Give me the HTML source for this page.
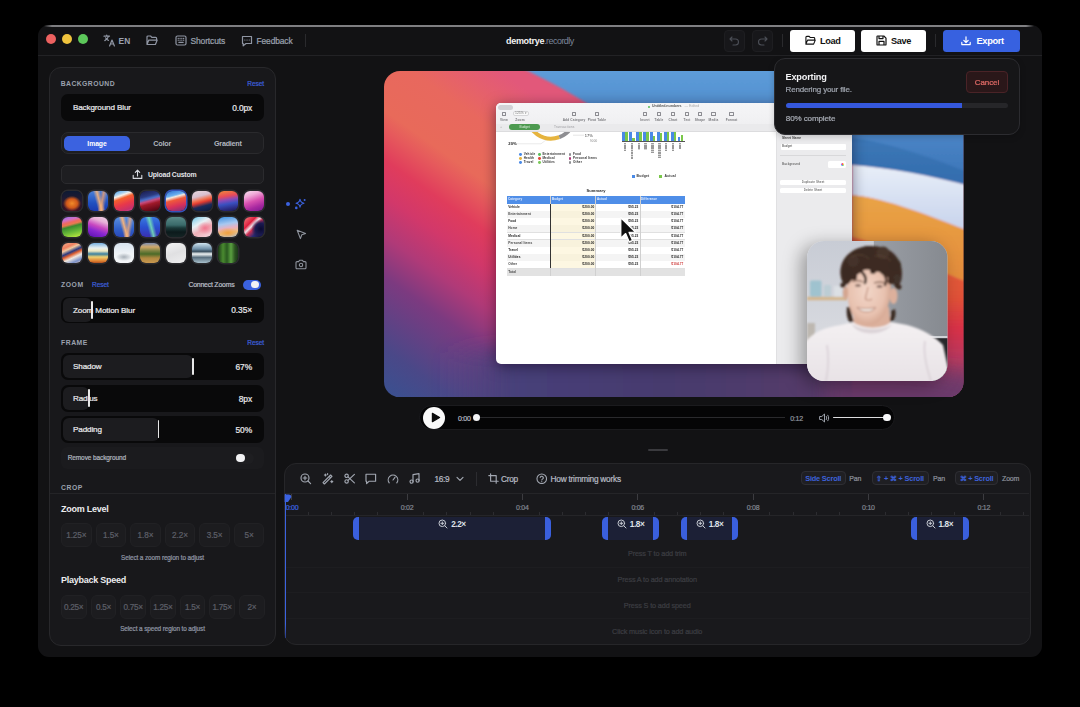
<!DOCTYPE html>
<html><head><meta charset="utf-8">
<style>
*{box-sizing:border-box;margin:0;padding:0}
html,body{width:1080px;height:707px;background:#000;overflow:hidden;font-family:"Liberation Sans",sans-serif}
.a{position:absolute}
.win{left:38px;top:25px;width:1004px;height:632px;background:#121214;border-radius:11px;overflow:hidden}
.topline{left:44px;top:25px;width:990px;height:1.7px;background:linear-gradient(90deg,rgba(125,125,128,0) 0,#7d7d80 8px,#808083 982px,rgba(125,125,128,0) 100%)}
.hdrline{left:38px;top:55px;width:1004px;height:1px;background:#222225}
.dot{width:10px;height:10px;border-radius:50%}
.t{white-space:nowrap;line-height:1}
.ico{stroke:#8f95a3;fill:none;stroke-width:1.2;stroke-linecap:round;stroke-linejoin:round}
.btnw{background:#fff;border-radius:3px}
.panel{background:#18181b;border:1px solid #262629;border-radius:11px}
.lbl{font-size:6.6px;font-weight:700;letter-spacing:.7px;color:#9aa0ad}
.reset{font-size:6.8px;color:#3d5fd9}
.row{background:#09090a;border-radius:7px}
.fill{background:#1c1c1f;border-radius:6px}
.thumbline{width:1.6px;background:#e8e8e8}
.rt{font-size:8px;color:#e6e6e8}
.th{width:20.5px;height:21px;border-radius:6px;border:1.5px solid #2a2a2e}
</style></head><body>
<div class="a win"></div>
<div class="a topline"></div>
<div class="a hdrline"></div>

<!-- traffic lights -->
<div class="a dot" style="left:46.3px;top:33.8px;background:#ec6160"></div>
<div class="a dot" style="left:62px;top:33.8px;background:#efc33d"></div>
<div class="a dot" style="left:77.7px;top:33.8px;background:#5cc75a"></div>


<!-- header left -->
<svg class="a" style="left:103px;top:34px" width="13" height="13" viewBox="0 0 13 13"><g class="ico" stroke-width="1.1"><path d="M1 2.2h5.5M3.7 1v1.2M5.6 2.2c-.6 2-1.8 3.4-3.8 4.4M2.6 3.8c.7 1.3 1.6 2.1 2.8 2.6"/><path d="M6.6 12l2.4-6 2.4 6M7.4 10h3.2"/></g></svg>
<div class="a t" style="left:118.5px;top:37.4px;font-size:8.4px;color:#9ba1ae;font-weight:700;letter-spacing:.1px">EN</div>
<svg class="a" style="left:146px;top:34.5px" width="12" height="11" viewBox="0 0 12 11"><path class="ico" d="M1 9.5V2a1 1 0 0 1 1-1h2.6l1.2 1.3H9.6a1 1 0 0 1 1 1v1.2M1 9.5l1.8-4.4h8.4L9.4 9.5z"/></svg>
<svg class="a" style="left:175px;top:35px" width="12" height="11" viewBox="0 0 12 11"><g class="ico"><rect x="1" y="1" width="10" height="9" rx="1.5"/><path d="M3.2 3.4h.1M5 3.4h.1M6.8 3.4h.1M8.6 3.4h.1M3.2 5.2h.1M5 5.2h.1M6.8 5.2h.1M8.6 5.2h.1M3.8 7.3h4.4"/></g></svg>
<div class="a t" style="-webkit-text-stroke:.22px currentColor;left:190.5px;top:37.1px;font-size:8.5px;color:#9ba1ae;letter-spacing:-.15px">Shortcuts</div>
<svg class="a" style="left:241px;top:34.5px" width="12" height="12" viewBox="0 0 12 12"><g class="ico"><path d="M1.5 1.5h9v7H5L2.2 10.8V8.5h-.7z"/><path d="M3.8 5h.1M6 5h.1M8.2 5h.1"/></g></svg>
<div class="a t" style="-webkit-text-stroke:.22px currentColor;left:256.5px;top:37.1px;font-size:8.4px;color:#9ba1ae;letter-spacing:-.1px">Feedback</div>
<div class="a" style="left:305px;top:34px;width:1px;height:13px;background:#2a2a2d"></div>
<!-- title -->
<div class="a t" style="left:506px;top:37.2px;font-size:9px;letter-spacing:-.3px"><span style="color:#f2f2f3;font-weight:700">demotrye</span><span style="color:#7b8598;letter-spacing:-.55px">.recordly</span></div>
<!-- header right -->
<div class="a" style="left:724px;top:30px;width:21px;height:21.5px;border-radius:4px;background:#17171a;border:1px solid #1e1e21"></div>
<svg class="a" style="left:729px;top:35px" width="11" height="11" viewBox="0 0 11 11"><path d="M3 2 1 4l2 2M1 4h5.5a3 3 0 0 1 0 6H4" fill="none" stroke="#4b4e56" stroke-width="1.1" stroke-linecap="round" stroke-linejoin="round"/></svg>
<div class="a" style="left:751.5px;top:30px;width:21px;height:21.5px;border-radius:4px;background:#17171a;border:1px solid #1e1e21"></div>
<svg class="a" style="left:756.5px;top:35px" width="11" height="11" viewBox="0 0 11 11"><path d="M8 2l2 2-2 2M10 4H4.5a3 3 0 0 0 0 6H7" fill="none" stroke="#4b4e56" stroke-width="1.1" stroke-linecap="round" stroke-linejoin="round"/></svg>
<div class="a" style="left:781.5px;top:34px;width:1px;height:13px;background:#2a2a2d"></div>
<div class="a btnw" style="left:789.7px;top:29.6px;width:65.8px;height:22px"></div>
<svg class="a" style="left:805px;top:35px" width="11" height="11" viewBox="0 0 12 11"><path d="M1 9.5V2a1 1 0 0 1 1-1h2.6l1.2 1.3H9.6a1 1 0 0 1 1 1v1.2M1 9.5l1.8-4.4h8.4L9.4 9.5z" fill="none" stroke="#111" stroke-width="1.2" stroke-linejoin="round"/></svg>
<div class="a t" style="left:820px;top:37px;font-size:9.2px;font-weight:700;color:#111;letter-spacing:-.35px">Load</div>
<div class="a btnw" style="left:860.8px;top:29.6px;width:65.5px;height:22px"></div>
<svg class="a" style="left:875.5px;top:35px" width="11" height="11" viewBox="0 0 11 11"><g fill="none" stroke="#111" stroke-width="1.2" stroke-linejoin="round"><path d="M1 1.6A.6.6 0 0 1 1.6 1h6.2L10 3.2v6.2a.6.6 0 0 1-.6.6H1.6a.6.6 0 0 1-.6-.6z"/><path d="M3 1v2.6h4V1M3 10V6.4h5V10"/></g></svg>
<div class="a t" style="left:891px;top:37px;font-size:9.2px;font-weight:700;color:#111;letter-spacing:-.35px">Save</div>
<div class="a" style="left:934.5px;top:34px;width:1px;height:13px;background:#2a2a2d"></div>
<div class="a" style="left:943.2px;top:29.8px;width:76.6px;height:21.9px;border-radius:3.5px;background:#3761e0"></div>
<svg class="a" style="left:960.5px;top:35.8px" width="10" height="10" viewBox="0 0 10 10"><g fill="none" stroke="#fff" stroke-width="1.2" stroke-linecap="round" stroke-linejoin="round"><path d="M5 .8v5.6M2.8 4.3 5 6.5l2.2-2.2M.8 6.4v2.2h8.4V6.4"/></g></svg>
<div class="a t" style="left:976.5px;top:37px;font-size:9.3px;font-weight:700;color:#fff;letter-spacing:-.35px">Export</div>
<!-- sidebar -->
<div class="a" style="left:49.3px;top:67.0px;width:226.5px;height:578.5px;background:#18181b;border:1px solid #28282b;border-radius:12px"></div>
<div class="a t" style="left:60.7px;top:80.5px;font-size:6.8px;color:#9ba1ae;font-weight:700;letter-spacing:0.45px;">BACKGROUND</div>
<div class="a t" style="right:816.0px;top:80.6px;font-size:6.6px;color:#3d5fd9;font-weight:400;letter-spacing:-0.1px;-webkit-text-stroke:.22px currentColor;">Reset</div>
<div class="a" style="left:61.1px;top:94.4px;width:202.7px;height:26.7px;background:#09090a;border-radius:7px"></div>
<div class="a t" style="left:72.9px;top:104.4px;font-size:8.1px;color:#e8e8ea;font-weight:400;letter-spacing:-0.12px;-webkit-text-stroke:.22px currentColor;">Background Blur</div>
<div class="a t" style="right:827.8px;top:104.3px;font-size:8.4px;color:#e8e8ea;font-weight:400;letter-spacing:-0.1px;-webkit-text-stroke:.22px currentColor;">0.0px</div>
<div class="a" style="left:61.0px;top:132.2px;width:203.0px;height:22.2px;background:#1d1d20;border:1px solid #2a2a2d;border-radius:7px"></div>
<div class="a" style="left:64.0px;top:136.0px;width:66.0px;height:14.7px;background:#3b62e0;border-radius:5px"></div>
<div class="a t" style="left:97.0px;transform:translateX(-50%);top:140.5px;font-size:6.8px;color:#ffffff;font-weight:700;letter-spacing:-0.05px;">Image</div>
<div class="a t" style="left:162.2px;transform:translateX(-50%);top:140.4px;font-size:7.2px;color:#b0b5bf;font-weight:700;letter-spacing:-0.15px;">Color</div>
<div class="a t" style="left:227.8px;transform:translateX(-50%);top:140.4px;font-size:7.2px;color:#b0b5bf;font-weight:700;letter-spacing:-0.25px;">Gradient</div>
<div class="a" style="left:61.0px;top:165.0px;width:203.0px;height:18.8px;background:#1e1e21;border:1px solid #2b2b2e;border-radius:5px"></div>
<svg class="a" style="left:131.5px;top:168.5px" width="11" height="11" viewBox="0 0 11 11"><g fill="none" stroke="#d8dae0" stroke-width="1.1" stroke-linecap="round" stroke-linejoin="round"><path d="M5.5 7V1.2M3.3 3.3 5.5 1.1l2.2 2.2M1.2 6.2v3.2h8.6V6.2"/></g></svg>
<div class="a t" style="left:148.0px;top:171.5px;font-size:6.9px;color:#e2e4e8;font-weight:700;letter-spacing:-0.2px;">Upload Custom</div>
<div class="a" style="left:62.2px;top:191.2px;width:19.4px;height:19.5px;background:radial-gradient(ellipse 60% 50% at 50% 62%,#f08a2a 0,#d0581a 45%,transparent 75%),radial-gradient(ellipse 40% 35% at 50% 90%,#5a1a30 0,transparent 100%),linear-gradient(180deg,#0c1a34 0,#2a1a30 60%,#3a1020 100%);border-radius:6px;box-shadow:0 0 0 1.5px #2b2b2f"></div>
<div class="a" style="left:88.2px;top:191.2px;width:19.4px;height:19.5px;background:linear-gradient(75deg,transparent 40%,rgba(250,180,120,.9) 55%,transparent 70%),linear-gradient(100deg,transparent 55%,rgba(240,160,110,.8) 68%,transparent 85%),linear-gradient(180deg,#4a80d8 0,#2050c0 60%,#1a3ab0 100%);border-radius:6px;box-shadow:0 0 0 1.5px #2b2b2f"></div>
<div class="a" style="left:114.2px;top:191.2px;width:19.4px;height:19.5px;background:linear-gradient(160deg,#4aa0e8 0,#a8d0f0 18%,#f6f0e8 26%,#f4602e 38%,#e8384a 62%,#c8306a 85%,#c84a9a 100%);border-radius:6px;box-shadow:0 0 0 1.5px #2b2b2f"></div>
<div class="a" style="left:140.2px;top:191.2px;width:19.4px;height:19.5px;background:linear-gradient(165deg,#1a1a4a 0,#2a3a80 28%,#4a70c8 40%,#c84a7a 50%,#a01a2a 62%,#6a0a1a 85%,#3a0a10 100%);border-radius:6px;box-shadow:0 0 0 1.5px #2b2b2f"></div>
<div class="a" style="left:166.2px;top:191.2px;width:19.4px;height:19.5px;background:linear-gradient(165deg,#2a6ad0 0,#6ab0f0 25%,#f0e8e0 32%,#f05a3a 45%,#d8305a 70%,#7a3080 100%);border-radius:6px;box-shadow:0 0 0 1.5px #3552b8"></div>
<div class="a" style="left:192.2px;top:191.2px;width:19.4px;height:19.5px;background:linear-gradient(165deg,#e8d8e0 0,#d8c0d0 28%,#f07050 45%,#e03a30 55%,#1a2a5a 72%,#0a1a3a 100%);border-radius:6px;box-shadow:0 0 0 1.5px #2b2b2f"></div>
<div class="a" style="left:218.2px;top:191.2px;width:19.4px;height:19.5px;background:linear-gradient(170deg,#f08a3a 0,#e84a5a 28%,#8a4ab8 45%,#3a50c0 62%,#2a2a80 85%,#1a1a50 100%);border-radius:6px;box-shadow:0 0 0 1.5px #2b2b2f"></div>
<div class="a" style="left:244.2px;top:191.2px;width:19.4px;height:19.5px;background:linear-gradient(160deg,#f8e0f0 0,#f0a8d8 25%,#d850b0 50%,#a828a0 75%,#7a1890 100%);border-radius:6px;box-shadow:0 0 0 1.5px #2b2b2f"></div>
<div class="a" style="left:62.2px;top:217.2px;width:19.4px;height:19.5px;background:linear-gradient(165deg,#8a70e8 0,#d070c8 18%,#f06a60 30%,#e87a50 38%,#3a8a30 48%,#68b838 70%,#c8f040 100%);border-radius:6px;box-shadow:0 0 0 1.5px #2b2b2f"></div>
<div class="a" style="left:88.2px;top:217.2px;width:19.4px;height:19.5px;background:linear-gradient(200deg,#f0d8e8 0,#e8b0d8 25%,#c848c0 48%,#8a28d0 68%,#5a10b0 100%);border-radius:6px;box-shadow:0 0 0 1.5px #2b2b2f"></div>
<div class="a" style="left:114.2px;top:217.2px;width:19.4px;height:19.5px;background:linear-gradient(75deg,transparent 38%,rgba(250,180,120,.95) 52%,transparent 66%),linear-gradient(100deg,transparent 55%,rgba(240,170,120,.8) 70%,transparent 85%),linear-gradient(180deg,#5a90e0 0,#3060c8 60%,#2a48b8 100%);border-radius:6px;box-shadow:0 0 0 1.5px #2b2b2f"></div>
<div class="a" style="left:140.2px;top:217.2px;width:19.4px;height:19.5px;background:linear-gradient(75deg,transparent 40%,rgba(120,230,180,.85) 55%,transparent 70%),linear-gradient(180deg,#3a7ae0 0,#2a50d0 50%,#3a30b0 100%);border-radius:6px;box-shadow:0 0 0 1.5px #2b2b2f"></div>
<div class="a" style="left:166.2px;top:217.2px;width:19.4px;height:19.5px;background:linear-gradient(180deg,#5a8a88 0,#3a6a6a 40%,#1a3838 55%,#0c1a1c 75%,#142424 100%);border-radius:6px;box-shadow:0 0 0 1.5px #2b2b2f"></div>
<div class="a" style="left:192.2px;top:217.2px;width:19.4px;height:19.5px;background:radial-gradient(ellipse 50% 40% at 65% 55%,#f07890 0,transparent 80%),linear-gradient(150deg,#70c8e8 0,#e8f0f4 35%,#f0b0b8 60%,#f4d8e0 100%);border-radius:6px;box-shadow:0 0 0 1.5px #2b2b2f"></div>
<div class="a" style="left:218.2px;top:217.2px;width:19.4px;height:19.5px;background:radial-gradient(ellipse 60% 30% at 50% 80%,#f0a040 0,transparent 90%),linear-gradient(170deg,#3a90e0 0,#a8c8f0 35%,#e8b0c0 55%,#f0c080 75%,#a0c0e8 100%);border-radius:6px;box-shadow:0 0 0 1.5px #2b2b2f"></div>
<div class="a" style="left:244.2px;top:217.2px;width:19.4px;height:19.5px;background:radial-gradient(ellipse 70% 70% at 85% 60%,#0a0a30 0,#1a1a50 40%,transparent 70%),linear-gradient(135deg,#f08080 0,#e02040 30%,#f0e0e8 42%,#d03050 52%,#2a2a70 70%,#0a0a30 100%);border-radius:6px;box-shadow:0 0 0 1.5px #2b2b2f"></div>
<div class="a" style="left:62.2px;top:243.2px;width:19.4px;height:19.5px;background:linear-gradient(155deg,#f0b090 0,#f08060 22%,#f0c8a0 32%,#2a3a80 45%,#e06030 55%,#f0e8e0 68%,#7a90c8 85%,#f0d0c0 100%);border-radius:6px;box-shadow:0 0 0 1.5px #2b2b2f"></div>
<div class="a" style="left:88.2px;top:243.2px;width:19.4px;height:19.5px;background:linear-gradient(180deg,#78b0e0 0,#e8f0f0 25%,#f0e8c0 40%,#3a80a0 55%,#f0d070 70%,#e08030 90%,#b05020 100%);border-radius:6px;box-shadow:0 0 0 1.5px #2b2b2f"></div>
<div class="a" style="left:114.2px;top:243.2px;width:19.4px;height:19.5px;background:radial-gradient(ellipse 40% 20% at 50% 70%,#a8b0b8 0,transparent 100%),linear-gradient(180deg,#d8e4ee 0,#eef2f6 50%,#f4f6f8 100%);border-radius:6px;box-shadow:0 0 0 1.5px #2b2b2f"></div>
<div class="a" style="left:140.2px;top:243.2px;width:19.4px;height:19.5px;background:linear-gradient(180deg,#8090b0 0,#d0a868 20%,#7a8040 40%,#4a6a28 55%,#b08840 75%,#c89850 100%);border-radius:6px;box-shadow:0 0 0 1.5px #2b2b2f"></div>
<div class="a" style="left:166.2px;top:243.2px;width:19.4px;height:19.5px;background:linear-gradient(160deg,#f4f4f4 0,#e0e0e2 50%,#eeeeef 100%);border-radius:6px;box-shadow:0 0 0 1.5px #2b2b2f"></div>
<div class="a" style="left:192.2px;top:243.2px;width:19.4px;height:19.5px;background:linear-gradient(180deg,#d0e4f0 0,#7090a8 30%,#3a5060 42%,#f0f4f4 55%,#5a7080 72%,#a8c0cc 100%);border-radius:6px;box-shadow:0 0 0 1.5px #2b2b2f"></div>
<div class="a" style="left:218.2px;top:243.2px;width:19.4px;height:19.5px;background:linear-gradient(90deg,#1a3818 0,#4a8a30 25%,#2a5a20 45%,#5aa040 65%,#2a5020 85%,#1a3a18 100%);border-radius:6px;box-shadow:0 0 0 1.5px #2b2b2f"></div>
<div class="a t" style="left:61.0px;top:281.7px;font-size:6.8px;color:#9ba1ae;font-weight:700;letter-spacing:0.55px;">ZOOM</div>
<div class="a t" style="left:92.0px;top:281.8px;font-size:6.6px;color:#3d5fd9;font-weight:400;letter-spacing:-0.1px;-webkit-text-stroke:.22px currentColor;">Reset</div>
<div class="a t" style="left:188.4px;top:281.7px;font-size:6.9px;color:#b9bdc6;font-weight:400;letter-spacing:-0.2px;-webkit-text-stroke:.22px currentColor;">Connect Zooms</div>
<div class="a" style="left:242.7px;top:279.6px;width:18.1px;height:10.0px;background:#3b62e0;border-radius:5px"></div>
<div class="a" style="left:251.3px;top:281.1px;width:7.4px;height:7.4px;border-radius:50%;background:#f2f2f4"></div>
<div class="a" style="left:61.0px;top:296.6px;width:203.0px;height:26.6px;background:#09090a;border-radius:7px"></div>
<div class="a" style="left:62.5px;top:298.2px;width:29.3px;height:23.4px;background:#1c1c1f;border-radius:6px"></div>
<div class="a" style="left:90.8px;top:301.0px;width:1.8px;height:17.8px;background:#e8e8e8;border-radius:1px"></div>
<div class="a t" style="left:73.0px;top:306.5px;font-size:8.1px;color:#e8e8ea;font-weight:400;letter-spacing:-0.12px;-webkit-text-stroke:.22px currentColor;">Zoom Motion Blur</div>
<div class="a t" style="right:828.0px;top:306.4px;font-size:8.4px;color:#e8e8ea;font-weight:400;letter-spacing:-0.1px;-webkit-text-stroke:.22px currentColor;">0.35×</div>
<div class="a t" style="left:61.0px;top:339.5px;font-size:6.8px;color:#9ba1ae;font-weight:700;letter-spacing:0.55px;">FRAME</div>
<div class="a t" style="right:816.0px;top:339.6px;font-size:6.6px;color:#3d5fd9;font-weight:400;letter-spacing:-0.1px;-webkit-text-stroke:.22px currentColor;">Reset</div>
<div class="a" style="left:61.0px;top:353.2px;width:203.0px;height:26.6px;background:#09090a;border-radius:7px"></div>
<div class="a" style="left:62.5px;top:354.8px;width:130.3px;height:23.4px;background:#1c1c1f;border-radius:6px"></div>
<div class="a" style="left:191.8px;top:357.6px;width:1.8px;height:17.8px;background:#e8e8e8;border-radius:1px"></div>
<div class="a t" style="left:73.0px;top:363.1px;font-size:8.1px;color:#e8e8ea;font-weight:400;letter-spacing:-0.12px;-webkit-text-stroke:.22px currentColor;">Shadow</div>
<div class="a t" style="right:828.0px;top:363.0px;font-size:8.4px;color:#e8e8ea;font-weight:400;letter-spacing:-0.1px;-webkit-text-stroke:.22px currentColor;">67%</div>
<div class="a" style="left:61.0px;top:384.9px;width:203.0px;height:26.7px;background:#09090a;border-radius:7px"></div>
<div class="a" style="left:62.5px;top:386.5px;width:26.7px;height:23.5px;background:#1c1c1f;border-radius:6px"></div>
<div class="a" style="left:88.2px;top:389.3px;width:1.8px;height:17.9px;background:#e8e8e8;border-radius:1px"></div>
<div class="a t" style="left:73.0px;top:394.8px;font-size:8.1px;color:#e8e8ea;font-weight:400;letter-spacing:-0.12px;-webkit-text-stroke:.22px currentColor;">Radius</div>
<div class="a t" style="right:828.0px;top:394.7px;font-size:8.4px;color:#e8e8ea;font-weight:400;letter-spacing:-0.1px;-webkit-text-stroke:.22px currentColor;">8px</div>
<div class="a" style="left:61.0px;top:416.0px;width:203.0px;height:26.6px;background:#09090a;border-radius:7px"></div>
<div class="a" style="left:62.5px;top:417.6px;width:96.1px;height:23.4px;background:#1c1c1f;border-radius:6px"></div>
<div class="a" style="left:157.6px;top:420.4px;width:1.8px;height:17.8px;background:#e8e8e8;border-radius:1px"></div>
<div class="a t" style="left:73.0px;top:425.9px;font-size:8.1px;color:#e8e8ea;font-weight:400;letter-spacing:-0.12px;-webkit-text-stroke:.22px currentColor;">Padding</div>
<div class="a t" style="right:828.0px;top:425.8px;font-size:8.4px;color:#e8e8ea;font-weight:400;letter-spacing:-0.1px;-webkit-text-stroke:.22px currentColor;">50%</div>
<div class="a" style="left:61.0px;top:447.3px;width:203.0px;height:21.3px;background:#1b1b1e;border-radius:6px"></div>
<div class="a t" style="left:67.7px;top:455.3px;font-size:6.5px;color:#aeb3bd;font-weight:400;letter-spacing:-0.1px;-webkit-text-stroke:.22px currentColor;">Remove background</div>
<div class="a" style="left:235.3px;top:452.6px;width:19.2px;height:11.0px;background:#1e1e21;border-radius:5.5px"></div>
<div class="a" style="left:236.4px;top:453.7px;width:8.8px;height:8.8px;border-radius:50%;background:#f2f2f4"></div>
<div class="a t" style="left:61.0px;top:485.1px;font-size:6.8px;color:#9ba1ae;font-weight:700;letter-spacing:0.55px;">CROP</div>
<div class="a" style="left:49.8px;top:493.4px;width:225.5px;height:1.0px;background:#242427"></div>
<div class="a t" style="left:61.0px;top:505.2px;font-size:9px;color:#ececee;font-weight:700;letter-spacing:-0.25px;">Zoom Level</div>
<div class="a" style="left:61.0px;top:523.2px;width:30.6px;height:24.0px;background:#1c1c1f;border:1px solid #212124;border-radius:6px"></div>
<div class="a t" style="left:76.3px;transform:translateX(-50%);top:531.8px;font-size:8.2px;color:#5c5f68;font-weight:400;letter-spacing:-0.1px;-webkit-text-stroke:.22px currentColor;">1.25×</div>
<div class="a" style="left:95.6px;top:523.2px;width:30.6px;height:24.0px;background:#1c1c1f;border:1px solid #212124;border-radius:6px"></div>
<div class="a t" style="left:110.9px;transform:translateX(-50%);top:531.8px;font-size:8.2px;color:#5c5f68;font-weight:400;letter-spacing:-0.1px;-webkit-text-stroke:.22px currentColor;">1.5×</div>
<div class="a" style="left:130.2px;top:523.2px;width:30.6px;height:24.0px;background:#1c1c1f;border:1px solid #212124;border-radius:6px"></div>
<div class="a t" style="left:145.5px;transform:translateX(-50%);top:531.8px;font-size:8.2px;color:#5c5f68;font-weight:400;letter-spacing:-0.1px;-webkit-text-stroke:.22px currentColor;">1.8×</div>
<div class="a" style="left:164.8px;top:523.2px;width:30.6px;height:24.0px;background:#1c1c1f;border:1px solid #212124;border-radius:6px"></div>
<div class="a t" style="left:180.0px;transform:translateX(-50%);top:531.8px;font-size:8.2px;color:#5c5f68;font-weight:400;letter-spacing:-0.1px;-webkit-text-stroke:.22px currentColor;">2.2×</div>
<div class="a" style="left:199.3px;top:523.2px;width:30.6px;height:24.0px;background:#1c1c1f;border:1px solid #212124;border-radius:6px"></div>
<div class="a t" style="left:214.6px;transform:translateX(-50%);top:531.8px;font-size:8.2px;color:#5c5f68;font-weight:400;letter-spacing:-0.1px;-webkit-text-stroke:.22px currentColor;">3.5×</div>
<div class="a" style="left:233.9px;top:523.2px;width:30.6px;height:24.0px;background:#1c1c1f;border:1px solid #212124;border-radius:6px"></div>
<div class="a t" style="left:249.2px;transform:translateX(-50%);top:531.8px;font-size:8.2px;color:#5c5f68;font-weight:400;letter-spacing:-0.1px;-webkit-text-stroke:.22px currentColor;">5×</div>
<div class="a t" style="left:162.5px;transform:translateX(-50%);top:554.7px;font-size:6.4px;color:#8e94a2;font-weight:400;letter-spacing:-0.1px;-webkit-text-stroke:.22px currentColor;">Select a zoom region to adjust</div>
<div class="a t" style="left:61.0px;top:576.4px;font-size:9px;color:#ececee;font-weight:700;letter-spacing:-0.25px;">Playback Speed</div>
<div class="a" style="left:61.0px;top:595.0px;width:25.5px;height:23.7px;background:#1c1c1f;border:1px solid #212124;border-radius:6px"></div>
<div class="a t" style="left:73.7px;transform:translateX(-50%);top:603.5px;font-size:8.2px;color:#5c5f68;font-weight:400;letter-spacing:-0.3px;-webkit-text-stroke:.22px currentColor;">0.25×</div>
<div class="a" style="left:90.7px;top:595.0px;width:25.5px;height:23.7px;background:#1c1c1f;border:1px solid #212124;border-radius:6px"></div>
<div class="a t" style="left:103.4px;transform:translateX(-50%);top:603.5px;font-size:8.2px;color:#5c5f68;font-weight:400;letter-spacing:-0.3px;-webkit-text-stroke:.22px currentColor;">0.5×</div>
<div class="a" style="left:120.3px;top:595.0px;width:25.5px;height:23.7px;background:#1c1c1f;border:1px solid #212124;border-radius:6px"></div>
<div class="a t" style="left:133.1px;transform:translateX(-50%);top:603.5px;font-size:8.2px;color:#5c5f68;font-weight:400;letter-spacing:-0.3px;-webkit-text-stroke:.22px currentColor;">0.75×</div>
<div class="a" style="left:150.0px;top:595.0px;width:25.5px;height:23.7px;background:#1c1c1f;border:1px solid #212124;border-radius:6px"></div>
<div class="a t" style="left:162.8px;transform:translateX(-50%);top:603.5px;font-size:8.2px;color:#5c5f68;font-weight:400;letter-spacing:-0.3px;-webkit-text-stroke:.22px currentColor;">1.25×</div>
<div class="a" style="left:179.7px;top:595.0px;width:25.5px;height:23.7px;background:#1c1c1f;border:1px solid #212124;border-radius:6px"></div>
<div class="a t" style="left:192.4px;transform:translateX(-50%);top:603.5px;font-size:8.2px;color:#5c5f68;font-weight:400;letter-spacing:-0.3px;-webkit-text-stroke:.22px currentColor;">1.5×</div>
<div class="a" style="left:209.4px;top:595.0px;width:25.5px;height:23.7px;background:#1c1c1f;border:1px solid #212124;border-radius:6px"></div>
<div class="a t" style="left:222.1px;transform:translateX(-50%);top:603.5px;font-size:8.2px;color:#5c5f68;font-weight:400;letter-spacing:-0.3px;-webkit-text-stroke:.22px currentColor;">1.75×</div>
<div class="a" style="left:239.0px;top:595.0px;width:25.5px;height:23.7px;background:#1c1c1f;border:1px solid #212124;border-radius:6px"></div>
<div class="a t" style="left:251.8px;transform:translateX(-50%);top:603.5px;font-size:8.2px;color:#5c5f68;font-weight:400;letter-spacing:-0.3px;-webkit-text-stroke:.22px currentColor;">2×</div>
<div class="a t" style="left:162.5px;transform:translateX(-50%);top:626.3px;font-size:6.4px;color:#8e94a2;font-weight:400;letter-spacing:-0.1px;-webkit-text-stroke:.22px currentColor;">Select a speed region to adjust</div>
<!-- /sidebar -->
<!-- canvas -->
<svg class="a" style="left:384px;top:70.6px" width="579.5" height="326.4" viewBox="0 0 579.5 326.4">
<defs>
<clipPath id="cc"><rect width="579.5" height="326.4" rx="16"/></clipPath>
<linearGradient id="gbase" gradientUnits="userSpaceOnUse" x1="38.7" y1="-54.7" x2="-173" y2="245">
<stop offset="0" stop-color="#e2587a"/><stop offset=".14" stop-color="#e8685e"/><stop offset=".27" stop-color="#e86a5a"/><stop offset=".31" stop-color="#e65a5c"/><stop offset=".38" stop-color="#e03c5c"/><stop offset=".46" stop-color="#d2386a"/><stop offset=".55" stop-color="#b03a78"/><stop offset=".64" stop-color="#7c3a80"/><stop offset=".8" stop-color="#4a4888"/><stop offset=".9" stop-color="#3a5090"/>
</linearGradient>
<linearGradient id="gblue" x1="0" y1="0" x2="0" y2="1"><stop offset="0" stop-color="#5f9edb"/><stop offset="1" stop-color="#3a72b6"/></linearGradient>
<linearGradient id="gwhite" x1="0" y1="0" x2="0" y2="1"><stop offset="0" stop-color="#e8eef8"/><stop offset="1" stop-color="#c6d2ec"/></linearGradient>
<linearGradient id="gorange" x1="0" y1="0" x2="0" y2="1"><stop offset="0" stop-color="#e9a446"/><stop offset="1" stop-color="#e38a3a"/></linearGradient>
<linearGradient id="gred" x1="0" y1="0" x2="0" y2="1"><stop offset="0" stop-color="#e46a3a"/><stop offset=".36" stop-color="#e05038"/><stop offset=".53" stop-color="#d83048"/><stop offset=".7" stop-color="#b83a60"/><stop offset=".87" stop-color="#7a3a6a"/><stop offset="1" stop-color="#603a70"/></linearGradient>
<linearGradient id="gbot" x1="0" y1="0" x2="1" y2="0"><stop offset="0" stop-color="#44467e" stop-opacity="0"/><stop offset=".12" stop-color="#46407a"/><stop offset=".4" stop-color="#463a6e"/><stop offset=".7" stop-color="#563a6a"/><stop offset="1" stop-color="#7e3a6c"/></linearGradient>
<filter id="cb" x="-10%" y="-50%" width="120%" height="200%"><feGaussianBlur stdDeviation="10"/></filter>
<filter id="cb2" x="-10%" y="-50%" width="120%" height="200%"><feGaussianBlur stdDeviation="1.2"/></filter>
</defs>
<g clip-path="url(#cc)">
<rect width="579.5" height="326.4" fill="url(#gbase)"/>
<path d="M60 282 C200 276 400 274 600 282 L600 360 L60 360 Z" fill="url(#gbot)" filter="url(#cb)"/>
<g filter="url(#cb2)">
<path d="M133 -5 C166 10 192 25 212 38 C240 58 280 80 468 94 C505 97 545 104 590 116 L590 -5 Z" fill="url(#gblue)"/>
<path d="M460 66 C500 70 545 85 590 104 L590 120 C545 104 505 97 460 94 Z" fill="#24609f" opacity=".35"/>
<path d="M468 94 C505 97 545 104 590 116 L590 162 C545 145 505 128 468 124 Z" fill="url(#gwhite)"/>
<path d="M468 124 C505 128 545 145 590 162 L590 214 C545 196 505 175 468 166 Z" fill="url(#gorange)"/>
<path d="M468 166 C505 175 545 196 590 214 L590 340 L468 340 Z" fill="url(#gred)"/>
</g>
<path d="M440 300 C500 292 560 300 600 310 L600 360 L440 360 Z" fill="#6a3a6c" filter="url(#cb)" opacity=".8"/>
</g>
</svg>
<!-- /canvas -->
<!-- shot -->
<div class="a" style="left:496px;top:103.4px;width:356px;height:260.6px;border-radius:5px;overflow:hidden;background:#fff;box-shadow:0 3px 14px rgba(12,0,28,.5)">
<svg class="a" style="left:0;top:0" width="200" height="80" viewBox="0 0 200 80">
<g fill="none" stroke-width="4">
<path d="M31 11.6 A24 24 0 0 0 63.3 34.1" stroke="#e6b43e"/>
<path d="M63.3 34.1 A24 24 0 0 0 79 11.6" stroke="#8e8e92"/>
</g>
<path d="M77 32.2 L88 32.2" stroke="#bbb" stroke-width=".4"/>
<path d="M21 40.8 L45 40.8 L50 37" stroke="#ccc" stroke-width=".4" fill="none"/>
</svg>
<div class="a t" style="left:12.30px;top:38.20px;font-size:4.2px;color:#222;font-weight:700;letter-spacing:0px;">20%</div>
<div class="a t" style="left:88.80px;top:30.90px;font-size:4px;color:#333;font-weight:400;letter-spacing:0px;">17%</div>
<div class="a" style="left:23.30px;top:49.70px;width:2.80px;height:2.80px;background:#4a8ae6;border-radius:1.4px"></div>
<div class="a t" style="left:27.70px;top:49.55px;font-size:3.1px;color:#333;font-weight:700;letter-spacing:0.15px;">Vehicle</div>
<div class="a" style="left:23.30px;top:53.80px;width:2.80px;height:2.80px;background:#e6b43e;border-radius:1.4px"></div>
<div class="a t" style="left:27.70px;top:53.65px;font-size:3.1px;color:#333;font-weight:700;letter-spacing:0.15px;">Health</div>
<div class="a" style="left:23.30px;top:57.80px;width:2.80px;height:2.80px;background:#4a8ae6;border-radius:1.4px"></div>
<div class="a t" style="left:27.70px;top:57.65px;font-size:3.1px;color:#333;font-weight:700;letter-spacing:0.15px;">Travel</div>
<div class="a" style="left:42.00px;top:49.70px;width:2.80px;height:2.80px;background:#5ac05a;border-radius:1.4px"></div>
<div class="a t" style="left:46.40px;top:49.55px;font-size:3.1px;color:#333;font-weight:700;letter-spacing:0.15px;">Entertainment</div>
<div class="a" style="left:42.00px;top:53.80px;width:2.80px;height:2.80px;background:#e04a3a;border-radius:1.4px"></div>
<div class="a t" style="left:46.40px;top:53.65px;font-size:3.1px;color:#333;font-weight:700;letter-spacing:0.15px;">Medical</div>
<div class="a" style="left:42.00px;top:57.80px;width:2.80px;height:2.80px;background:#7ac85a;border-radius:1.4px"></div>
<div class="a t" style="left:46.40px;top:57.65px;font-size:3.1px;color:#333;font-weight:700;letter-spacing:0.15px;">Utilities</div>
<div class="a" style="left:72.60px;top:49.70px;width:2.80px;height:2.80px;background:#8e8e92;border-radius:1.4px"></div>
<div class="a t" style="left:77.00px;top:49.55px;font-size:3.1px;color:#333;font-weight:700;letter-spacing:0.15px;">Food</div>
<div class="a" style="left:72.60px;top:53.80px;width:2.80px;height:2.80px;background:#b03a7a;border-radius:1.4px"></div>
<div class="a t" style="left:77.00px;top:53.65px;font-size:3.1px;color:#333;font-weight:700;letter-spacing:0.15px;">Personal Items</div>
<div class="a" style="left:72.60px;top:57.80px;width:2.80px;height:2.80px;background:#8e8e92;border-radius:1.4px"></div>
<div class="a t" style="left:77.00px;top:57.65px;font-size:3.1px;color:#333;font-weight:700;letter-spacing:0.15px;">Other</div>
<div class="a" style="left:126.00px;top:38.00px;width:63.00px;height:0.50px;background:#555"></div>
<div class="a t" style="left:94.00px;top:37.10px;font-size:3px;color:#888;font-weight:400;letter-spacing:0.2px;">9000</div>
<div class="a" style="left:126.30px;top:27.50px;width:2.60px;height:10.50px;background:#4a8ae6"></div>
<div class="a" style="left:129.10px;top:29.00px;width:2.60px;height:9.00px;background:#7ac84a"></div>
<div class="a" style="left:127.60px;top:39.40px;width:2.20px;height:8.00px;background:repeating-linear-gradient(180deg,#555 0,#555 1.2px,#bbb 1.2px,#bbb 1.7px);opacity:.6;border-radius:.5px"></div>
<div class="a" style="left:133.25px;top:27.50px;width:2.60px;height:10.50px;background:#4a8ae6"></div>
<div class="a" style="left:136.05px;top:35.00px;width:2.60px;height:3.00px;background:#7ac84a"></div>
<div class="a" style="left:134.55px;top:39.40px;width:2.20px;height:16.00px;background:repeating-linear-gradient(180deg,#555 0,#555 1.2px,#bbb 1.2px,#bbb 1.7px);opacity:.6;border-radius:.5px"></div>
<div class="a" style="left:140.20px;top:27.50px;width:2.60px;height:10.50px;background:#4a8ae6"></div>
<div class="a" style="left:143.00px;top:27.50px;width:2.60px;height:10.50px;background:#7ac84a"></div>
<div class="a" style="left:141.50px;top:39.40px;width:2.20px;height:7.00px;background:repeating-linear-gradient(180deg,#555 0,#555 1.2px,#bbb 1.2px,#bbb 1.7px);opacity:.6;border-radius:.5px"></div>
<div class="a" style="left:147.15px;top:27.50px;width:2.60px;height:10.50px;background:#4a8ae6"></div>
<div class="a" style="left:149.95px;top:27.50px;width:2.60px;height:10.50px;background:#7ac84a"></div>
<div class="a" style="left:148.45px;top:39.40px;width:2.20px;height:7.00px;background:repeating-linear-gradient(180deg,#555 0,#555 1.2px,#bbb 1.2px,#bbb 1.7px);opacity:.6;border-radius:.5px"></div>
<div class="a" style="left:154.10px;top:27.50px;width:2.60px;height:10.50px;background:#4a8ae6"></div>
<div class="a" style="left:156.90px;top:33.00px;width:2.60px;height:5.00px;background:#7ac84a"></div>
<div class="a" style="left:155.40px;top:39.40px;width:2.20px;height:10.00px;background:repeating-linear-gradient(180deg,#555 0,#555 1.2px,#bbb 1.2px,#bbb 1.7px);opacity:.6;border-radius:.5px"></div>
<div class="a" style="left:161.05px;top:27.50px;width:2.60px;height:10.50px;background:#4a8ae6"></div>
<div class="a" style="left:163.85px;top:29.50px;width:2.60px;height:8.50px;background:#7ac84a"></div>
<div class="a" style="left:162.35px;top:39.40px;width:2.20px;height:15.00px;background:repeating-linear-gradient(180deg,#555 0,#555 1.2px,#bbb 1.2px,#bbb 1.7px);opacity:.6;border-radius:.5px"></div>
<div class="a" style="left:168.00px;top:27.50px;width:2.60px;height:10.50px;background:#4a8ae6"></div>
<div class="a" style="left:170.80px;top:27.50px;width:2.60px;height:10.50px;background:#7ac84a"></div>
<div class="a" style="left:169.30px;top:39.40px;width:2.20px;height:8.00px;background:repeating-linear-gradient(180deg,#555 0,#555 1.2px,#bbb 1.2px,#bbb 1.7px);opacity:.6;border-radius:.5px"></div>
<div class="a" style="left:174.95px;top:27.50px;width:2.60px;height:10.50px;background:#4a8ae6"></div>
<div class="a" style="left:177.75px;top:27.50px;width:2.60px;height:10.50px;background:#7ac84a"></div>
<div class="a" style="left:176.25px;top:39.40px;width:2.20px;height:8.00px;background:repeating-linear-gradient(180deg,#555 0,#555 1.2px,#bbb 1.2px,#bbb 1.7px);opacity:.6;border-radius:.5px"></div>
<div class="a" style="left:181.90px;top:34.00px;width:2.60px;height:4.00px;background:#4a8ae6"></div>
<div class="a" style="left:184.70px;top:32.00px;width:2.60px;height:6.00px;background:#7ac84a"></div>
<div class="a" style="left:183.20px;top:39.40px;width:2.20px;height:6.00px;background:repeating-linear-gradient(180deg,#555 0,#555 1.2px,#bbb 1.2px,#bbb 1.7px);opacity:.6;border-radius:.5px"></div>
<div class="a" style="left:135.50px;top:71.60px;width:3.00px;height:3.00px;background:#4a8ae6"></div>
<div class="a t" style="left:140.50px;top:71.40px;font-size:3.4px;color:#333;font-weight:700;letter-spacing:0.2px;">Budget</div>
<div class="a" style="left:163.00px;top:71.60px;width:3.00px;height:3.00px;background:#7ac84a"></div>
<div class="a t" style="left:168.50px;top:71.40px;font-size:3.4px;color:#333;font-weight:700;letter-spacing:0.2px;">Actual</div>
<div class="a t" style="left:100.00px;transform:translateX(-50%);top:85.20px;font-size:4px;color:#222;font-weight:700;letter-spacing:0.1px;">Summary</div>
<div class="a" style="left:11.00px;top:92.20px;width:177.80px;height:8.30px;background:#4f8ee8"></div>
<div class="a t" style="left:12.00px;top:94.80px;font-size:3px;color:#e8f0ff;font-weight:700;letter-spacing:0.15px;">Category</div>
<div class="a t" style="left:56.00px;top:94.80px;font-size:3px;color:#e8f0ff;font-weight:700;letter-spacing:0.15px;">Budget</div>
<div class="a t" style="left:101.00px;top:94.80px;font-size:3px;color:#e8f0ff;font-weight:700;letter-spacing:0.15px;">Actual</div>
<div class="a t" style="left:145.00px;top:94.80px;font-size:3px;color:#e8f0ff;font-weight:700;letter-spacing:0.15px;">Difference</div>
<div class="a" style="left:11.00px;top:100.50px;width:177.80px;height:7.18px;background:#ffffff"></div>
<div class="a" style="left:54.50px;top:100.50px;width:45.10px;height:7.18px;background:#fdf7e2"></div>
<div class="a" style="left:11.00px;top:107.38px;width:177.80px;height:0.30px;background:#e0e0e0"></div>
<div class="a t" style="left:12.20px;top:102.49px;font-size:3.2px;color:#222;font-weight:700;letter-spacing:0.1px;">Vehicle</div>
<div class="a t" style="right:257.50px;top:102.49px;font-size:3.2px;color:#222;font-weight:700;letter-spacing:0.1px;">$200.00</div>
<div class="a t" style="right:213.50px;top:102.49px;font-size:3.2px;color:#222;font-weight:700;letter-spacing:0.1px;">$95.23</div>
<div class="a t" style="right:168.50px;top:102.49px;font-size:3.2px;color:#222;font-weight:700;letter-spacing:0.1px;">$104.77</div>
<div class="a" style="left:11.00px;top:107.68px;width:177.80px;height:7.18px;background:#f4f4f4"></div>
<div class="a" style="left:54.50px;top:107.68px;width:45.10px;height:7.18px;background:#f8f2dc"></div>
<div class="a" style="left:11.00px;top:114.56px;width:177.80px;height:0.30px;background:#e0e0e0"></div>
<div class="a t" style="left:12.20px;top:109.67px;font-size:3.2px;color:#444;font-weight:700;letter-spacing:0.1px;">Entertainment</div>
<div class="a t" style="right:257.50px;top:109.67px;font-size:3.2px;color:#222;font-weight:700;letter-spacing:0.1px;">$200.00</div>
<div class="a t" style="right:213.50px;top:109.67px;font-size:3.2px;color:#222;font-weight:700;letter-spacing:0.1px;">$95.23</div>
<div class="a t" style="right:168.50px;top:109.67px;font-size:3.2px;color:#222;font-weight:700;letter-spacing:0.1px;">$104.77</div>
<div class="a" style="left:11.00px;top:114.86px;width:177.80px;height:7.18px;background:#ffffff"></div>
<div class="a" style="left:54.50px;top:114.86px;width:45.10px;height:7.18px;background:#fdf7e2"></div>
<div class="a" style="left:11.00px;top:121.74px;width:177.80px;height:0.30px;background:#e0e0e0"></div>
<div class="a t" style="left:12.20px;top:116.85px;font-size:3.2px;color:#222;font-weight:700;letter-spacing:0.1px;">Food</div>
<div class="a t" style="right:257.50px;top:116.85px;font-size:3.2px;color:#222;font-weight:700;letter-spacing:0.1px;">$200.00</div>
<div class="a t" style="right:213.50px;top:116.85px;font-size:3.2px;color:#222;font-weight:700;letter-spacing:0.1px;">$95.23</div>
<div class="a t" style="right:168.50px;top:116.85px;font-size:3.2px;color:#222;font-weight:700;letter-spacing:0.1px;">$104.77</div>
<div class="a" style="left:11.00px;top:122.04px;width:177.80px;height:7.18px;background:#f4f4f4"></div>
<div class="a" style="left:54.50px;top:122.04px;width:45.10px;height:7.18px;background:#f8f2dc"></div>
<div class="a" style="left:11.00px;top:128.92px;width:177.80px;height:0.30px;background:#e0e0e0"></div>
<div class="a t" style="left:12.20px;top:124.03px;font-size:3.2px;color:#444;font-weight:700;letter-spacing:0.1px;">Home</div>
<div class="a t" style="right:257.50px;top:124.03px;font-size:3.2px;color:#222;font-weight:700;letter-spacing:0.1px;">$200.00</div>
<div class="a t" style="right:213.50px;top:124.03px;font-size:3.2px;color:#222;font-weight:700;letter-spacing:0.1px;">$95.23</div>
<div class="a t" style="right:168.50px;top:124.03px;font-size:3.2px;color:#222;font-weight:700;letter-spacing:0.1px;">$104.77</div>
<div class="a" style="left:11.00px;top:129.22px;width:177.80px;height:7.18px;background:#ffffff"></div>
<div class="a" style="left:54.50px;top:129.22px;width:45.10px;height:7.18px;background:#fdf7e2"></div>
<div class="a" style="left:11.00px;top:136.10px;width:177.80px;height:0.30px;background:#e0e0e0"></div>
<div class="a t" style="left:12.20px;top:131.21px;font-size:3.2px;color:#222;font-weight:700;letter-spacing:0.1px;">Medical</div>
<div class="a t" style="right:257.50px;top:131.21px;font-size:3.2px;color:#222;font-weight:700;letter-spacing:0.1px;">$200.00</div>
<div class="a t" style="right:213.50px;top:131.21px;font-size:3.2px;color:#222;font-weight:700;letter-spacing:0.1px;">$95.23</div>
<div class="a t" style="right:168.50px;top:131.21px;font-size:3.2px;color:#222;font-weight:700;letter-spacing:0.1px;">$104.77</div>
<div class="a" style="left:11.00px;top:136.40px;width:177.80px;height:7.18px;background:#f4f4f4"></div>
<div class="a" style="left:54.50px;top:136.40px;width:45.10px;height:7.18px;background:#f8f2dc"></div>
<div class="a" style="left:11.00px;top:143.28px;width:177.80px;height:0.30px;background:#e0e0e0"></div>
<div class="a t" style="left:12.20px;top:138.39px;font-size:3.2px;color:#444;font-weight:700;letter-spacing:0.1px;">Personal Items</div>
<div class="a t" style="right:257.50px;top:138.39px;font-size:3.2px;color:#222;font-weight:700;letter-spacing:0.1px;">$200.00</div>
<div class="a t" style="right:213.50px;top:138.39px;font-size:3.2px;color:#222;font-weight:700;letter-spacing:0.1px;">$95.23</div>
<div class="a t" style="right:168.50px;top:138.39px;font-size:3.2px;color:#222;font-weight:700;letter-spacing:0.1px;">$104.77</div>
<div class="a" style="left:11.00px;top:143.58px;width:177.80px;height:7.18px;background:#ffffff"></div>
<div class="a" style="left:54.50px;top:143.58px;width:45.10px;height:7.18px;background:#fdf7e2"></div>
<div class="a" style="left:11.00px;top:150.46px;width:177.80px;height:0.30px;background:#e0e0e0"></div>
<div class="a t" style="left:12.20px;top:145.57px;font-size:3.2px;color:#222;font-weight:700;letter-spacing:0.1px;">Travel</div>
<div class="a t" style="right:257.50px;top:145.57px;font-size:3.2px;color:#222;font-weight:700;letter-spacing:0.1px;">$200.00</div>
<div class="a t" style="right:213.50px;top:145.57px;font-size:3.2px;color:#222;font-weight:700;letter-spacing:0.1px;">$95.23</div>
<div class="a t" style="right:168.50px;top:145.57px;font-size:3.2px;color:#222;font-weight:700;letter-spacing:0.1px;">$104.77</div>
<div class="a" style="left:11.00px;top:150.76px;width:177.80px;height:7.18px;background:#f4f4f4"></div>
<div class="a" style="left:54.50px;top:150.76px;width:45.10px;height:7.18px;background:#f8f2dc"></div>
<div class="a" style="left:11.00px;top:157.64px;width:177.80px;height:0.30px;background:#e0e0e0"></div>
<div class="a t" style="left:12.20px;top:152.75px;font-size:3.2px;color:#222;font-weight:700;letter-spacing:0.1px;">Utilities</div>
<div class="a t" style="right:257.50px;top:152.75px;font-size:3.2px;color:#222;font-weight:700;letter-spacing:0.1px;">$200.00</div>
<div class="a t" style="right:213.50px;top:152.75px;font-size:3.2px;color:#222;font-weight:700;letter-spacing:0.1px;">$95.23</div>
<div class="a t" style="right:168.50px;top:152.75px;font-size:3.2px;color:#222;font-weight:700;letter-spacing:0.1px;">$104.77</div>
<div class="a" style="left:11.00px;top:157.94px;width:177.80px;height:7.18px;background:#ffffff"></div>
<div class="a" style="left:54.50px;top:157.94px;width:45.10px;height:7.18px;background:#fdf7e2"></div>
<div class="a" style="left:11.00px;top:164.82px;width:177.80px;height:0.30px;background:#e0e0e0"></div>
<div class="a t" style="left:12.20px;top:159.93px;font-size:3.2px;color:#444;font-weight:700;letter-spacing:0.1px;">Other</div>
<div class="a t" style="right:257.50px;top:159.93px;font-size:3.2px;color:#222;font-weight:700;letter-spacing:0.1px;">$200.00</div>
<div class="a t" style="right:213.50px;top:159.93px;font-size:3.2px;color:#222;font-weight:700;letter-spacing:0.1px;">$95.23</div>
<div class="a t" style="right:168.50px;top:159.93px;font-size:3.2px;color:#c33;font-weight:700;letter-spacing:0.1px;">$104.77</div>
<div class="a" style="left:11.00px;top:165.12px;width:177.80px;height:7.18px;background:#e2e2e2"></div>
<div class="a t" style="left:12.20px;top:167.11px;font-size:3.2px;color:#444;font-weight:700;letter-spacing:0.1px;">Total</div>
<div class="a" style="left:54.25px;top:92.20px;width:0.50px;height:80.10px;background:#d0d0d0"></div>
<div class="a" style="left:99.35px;top:92.20px;width:0.50px;height:80.10px;background:#d0d0d0"></div>
<div class="a" style="left:143.55px;top:92.20px;width:0.50px;height:80.10px;background:#d0d0d0"></div>
<div class="a" style="left:54.30px;top:100.50px;width:0.60px;height:64.50px;background:#333"></div>
<div class="a" style="left:0.00px;top:0.00px;width:356.00px;height:27.60px;background:linear-gradient(180deg,#f5f5f7,#eeeef0)"></div>
<div class="a" style="left:0.00px;top:20.60px;width:356.00px;height:7.00px;background:#eaeaec"></div>
<div class="a" style="left:0.00px;top:27.20px;width:356.00px;height:0.60px;background:#dcdcde"></div>
<div class="a" style="left:2.00px;top:1.30px;width:15.00px;height:5.70px;background:#d2d2d6;border-radius:3px"></div>
<div class="a" style="left:152.20px;top:2.40px;width:1.80px;height:1.80px;background:#5ac05a;border-radius:50%"></div>
<div class="a t" style="left:156.00px;top:1.70px;font-size:3.6px;color:#555;font-weight:700;letter-spacing:0px;">Untitled.numbers</div>
<div class="a t" style="left:188.50px;top:1.70px;font-size:3.6px;color:#aaa;font-weight:400;letter-spacing:0px;">— Edited</div>
<div class="a" style="left:5.80px;top:9.00px;width:4.40px;height:3.80px;border:.7px solid #6a6a70;border-top-width:1.2px;border-radius:.6px;opacity:.75"></div>
<div class="a t" style="left:8.00px;transform:translateX(-50%);top:15.80px;font-size:3.2px;color:#77777b;font-weight:700;letter-spacing:0.15px;">View</div>
<div class="a" style="left:16.70px;top:7.60px;width:16.30px;height:5.40px;background:#fafafa;border:.5px solid #d6d6d8;border-radius:2px"></div>
<div class="a t" style="left:19.00px;top:8.60px;font-size:3.4px;color:#777;font-weight:400;letter-spacing:0px;">125% ▾</div>
<div class="a t" style="left:24.00px;transform:translateX(-50%);top:15.80px;font-size:3.2px;color:#77777b;font-weight:700;letter-spacing:0.15px;">Zoom</div>
<div class="a" style="left:75.80px;top:9.00px;width:4.40px;height:3.80px;border:.7px solid #6a6a70;border-top-width:1.2px;border-radius:.6px;opacity:.75"></div>
<div class="a t" style="left:78.00px;transform:translateX(-50%);top:15.80px;font-size:3.2px;color:#77777b;font-weight:700;letter-spacing:0.15px;">Add Category</div>
<div class="a" style="left:98.80px;top:9.00px;width:4.40px;height:3.80px;border:.7px solid #6a6a70;border-top-width:1.2px;border-radius:.6px;opacity:.75"></div>
<div class="a t" style="left:101.00px;transform:translateX(-50%);top:15.80px;font-size:3.2px;color:#77777b;font-weight:700;letter-spacing:0.15px;">Pivot Table</div>
<div class="a" style="left:146.80px;top:9.00px;width:4.40px;height:3.80px;border:.7px solid #6a6a70;border-top-width:1.2px;border-radius:.6px;opacity:.75"></div>
<div class="a t" style="left:149.00px;transform:translateX(-50%);top:15.80px;font-size:3.2px;color:#77777b;font-weight:700;letter-spacing:0.15px;">Insert</div>
<div class="a" style="left:160.80px;top:9.00px;width:4.40px;height:3.80px;border:.7px solid #6a6a70;border-top-width:1.2px;border-radius:.6px;opacity:.75"></div>
<div class="a t" style="left:163.00px;transform:translateX(-50%);top:15.80px;font-size:3.2px;color:#77777b;font-weight:700;letter-spacing:0.15px;">Table</div>
<div class="a" style="left:174.80px;top:9.00px;width:4.40px;height:3.80px;border:.7px solid #6a6a70;border-top-width:1.2px;border-radius:.6px;opacity:.75"></div>
<div class="a t" style="left:177.00px;transform:translateX(-50%);top:15.80px;font-size:3.2px;color:#77777b;font-weight:700;letter-spacing:0.15px;">Chart</div>
<div class="a" style="left:188.80px;top:9.00px;width:4.40px;height:3.80px;border:.7px solid #6a6a70;border-top-width:1.2px;border-radius:.6px;opacity:.75"></div>
<div class="a t" style="left:191.00px;transform:translateX(-50%);top:15.80px;font-size:3.2px;color:#77777b;font-weight:700;letter-spacing:0.15px;">Text</div>
<div class="a" style="left:201.80px;top:9.00px;width:4.40px;height:3.80px;border:.7px solid #6a6a70;border-top-width:1.2px;border-radius:.6px;opacity:.75"></div>
<div class="a t" style="left:204.00px;transform:translateX(-50%);top:15.80px;font-size:3.2px;color:#77777b;font-weight:700;letter-spacing:0.15px;">Shape</div>
<div class="a" style="left:215.30px;top:9.00px;width:4.40px;height:3.80px;border:.7px solid #6a6a70;border-top-width:1.2px;border-radius:.6px;opacity:.75"></div>
<div class="a t" style="left:217.50px;transform:translateX(-50%);top:15.80px;font-size:3.2px;color:#77777b;font-weight:700;letter-spacing:0.15px;">Media</div>
<div class="a" style="left:233.30px;top:9.00px;width:4.40px;height:3.80px;border:.7px solid #6a6a70;border-top-width:1.2px;border-radius:.6px;opacity:.75"></div>
<div class="a t" style="left:235.50px;transform:translateX(-50%);top:15.80px;font-size:3.2px;color:#77777b;font-weight:700;letter-spacing:0.15px;">Format</div>
<div class="a" style="left:13.00px;top:21.10px;width:31.30px;height:5.80px;background:#4d9a50;border-radius:3px"></div>
<div class="a t" style="left:28.60px;transform:translateX(-50%);top:22.40px;font-size:3.2px;color:#dfeee0;font-weight:400;letter-spacing:0px;">Budget</div>
<div class="a t" style="left:58.00px;top:22.40px;font-size:3.2px;color:#9a9a9e;font-weight:400;letter-spacing:0.2px;">Transactions</div>
<div class="a t" style="left:4.00px;top:22.20px;font-size:3.6px;color:#aaa;font-weight:400;letter-spacing:0px;">+</div>
<div class="a" style="left:279.50px;top:27.60px;width:76.50px;height:233.00px;background:#ebebed;border-left:.5px solid #e0e0e2"></div>
<div class="a t" style="left:286.00px;top:34.00px;font-size:3.2px;color:#444;font-weight:700;letter-spacing:0.1px;">Sheet Name</div>
<div class="a" style="left:284.60px;top:40.40px;width:65.10px;height:6.10px;background:#fff;border-radius:1px"></div>
<div class="a t" style="left:286.00px;top:41.90px;font-size:3px;color:#333;font-weight:400;letter-spacing:0.1px;">Budget</div>
<div class="a" style="left:284.00px;top:51.30px;width:66.00px;height:0.40px;background:#d8d8da"></div>
<div class="a t" style="left:286.00px;top:59.40px;font-size:3.2px;color:#444;font-weight:400;letter-spacing:0.1px;">Background</div>
<div class="a" style="left:332.00px;top:57.60px;width:17.50px;height:7.00px;background:#fff;border-radius:1.5px"></div>
<div class="a" style="left:345.00px;top:59.50px;width:3.00px;height:3.00px;background:conic-gradient(#f55,#fd5,#5d5,#5af,#a5f,#f55);border-radius:50%"></div>
<div class="a" style="left:284.00px;top:76.60px;width:66.00px;height:4.70px;background:#fff;border-radius:1.5px"></div>
<div class="a t" style="left:317.00px;transform:translateX(-50%);top:77.50px;font-size:3px;color:#444;font-weight:400;letter-spacing:0.1px;">Duplicate Sheet</div>
<div class="a" style="left:284.00px;top:84.60px;width:66.00px;height:4.70px;background:#fff;border-radius:1.5px"></div>
<div class="a t" style="left:317.00px;transform:translateX(-50%);top:85.50px;font-size:3px;color:#444;font-weight:400;letter-spacing:0.1px;">Delete Sheet</div>
<svg class="a" style="left:122.8px;top:112.5px" width="19" height="29" viewBox="0 0 16 24"><path d="M1.5 1.2 L1.5 18.5 L5.6 14.6 L8.6 21.6 L11.4 20.4 L8.5 13.6 L14 13.4 Z" fill="#111" stroke="#fff" stroke-width="1.1" stroke-linejoin="round"/></svg>
</div>
<!-- /shot -->
<!-- webcam -->
<div class="a" style="left:807px;top:240.5px;width:140.6px;height:140.1px;border-radius:17px;box-shadow:-6px 4px 18px rgba(0,0,0,.35)"></div>
<svg class="a" style="left:807px;top:240.5px" width="140.6" height="140.1" viewBox="0 0 140.6 140.1">
<defs>
<clipPath id="wc"><rect width="140.6" height="140.1" rx="17"/></clipPath>
<filter id="bl" x="-20%" y="-20%" width="140%" height="140%"><feGaussianBlur stdDeviation="1"/></filter>
<filter id="bl3" x="-20%" y="-20%" width="140%" height="140%"><feGaussianBlur stdDeviation="1.2"/></filter>
<linearGradient id="wallL" x1="0" y1="0" x2="0" y2="1"><stop offset="0" stop-color="#c8ccd5"/><stop offset=".6" stop-color="#d6d8de"/><stop offset="1" stop-color="#dcdde1"/></linearGradient>
<linearGradient id="wallR" x1="0" y1="0" x2="1" y2="0"><stop offset="0" stop-color="#9a9ea5"/><stop offset="1" stop-color="#868a90"/></linearGradient>
<radialGradient id="face" cx=".45" cy=".45" r=".62"><stop offset="0" stop-color="#f2d6c8"/><stop offset=".65" stop-color="#e8c2b0"/><stop offset="1" stop-color="#cf9e88"/></radialGradient>
<linearGradient id="shirt" x1="0" y1="0" x2="0" y2="1"><stop offset="0" stop-color="#f4f0f2"/><stop offset="1" stop-color="#e6e0e4"/></linearGradient>
</defs>
<g clip-path="url(#wc)">
<rect width="140.6" height="140.1" fill="url(#wallL)"/>
<rect x="66.8" y="0" width="73.8" height="96" fill="url(#wallR)"/>
<rect x="66.8" y="95" width="73.8" height="2.2" fill="#d0d2d6"/>
<rect x="66.8" y="97.2" width="73.8" height="43" fill="#26272a"/>
<g filter="url(#bl3)">
<rect x="0" y="55.8" width="40" height="3.4" fill="#d4b68c"/>
<rect x="3" y="39.5" width="11.5" height="16.3" rx="1.5" fill="#96c0cc" opacity=".85"/>
<rect x="17" y="44" width="7" height="11.8" rx="1" fill="#b4cad2" opacity=".7"/>
<rect x="27" y="45" width="8" height="10.8" rx="1" fill="#dde1e5" opacity=".9"/>
<rect x="0" y="82" width="8" height="20" fill="#a89c8a" opacity=".55"/>
</g>
<g filter="url(#bl)">
<!-- hanging hair strands -->
<path d="M40 66 C39 72 40 78 43 82 L47 81 C45 76 44 71 44 66 Z" fill="#3a2a22"/>
<path d="M84 70 C85 75 83 78 80 81 L86 80 C89 76 89 72 88 68 Z" fill="#3a2a22"/>
<!-- neck -->
<path d="M47 66 L82 66 L84 92 C74 100 56 100 46 92 Z" fill="#dcb09c"/>
<!-- face -->
<path d="M40 40 C39 58 43 75 52 81 C58 85 66 85 71 81 C80 74 84 60 84 42 C84 26 70 20 60 22 C48 24 41 30 40 40Z" fill="url(#face)"/>
<!-- ears -->
<ellipse cx="86.5" cy="55" rx="4" ry="8" fill="#ddb09c"/>
<ellipse cx="38.5" cy="52" rx="2.6" ry="6.5" fill="#d4a690"/>
<!-- hair top -->
<path d="M35 40 C31 30 34 18 44 11 C52 5 64 4 74 6 C86 9 95 18 95 32 C95 40 92 46 89 48 C87 42 84 38 80 36 C78 32 72 30 66 31 C62 27 56 28 53 32 C50 34 46 36 44 40 C41 44 38 46 35 40Z" fill="#3c2b22"/>
<circle cx="46" cy="20" r="6" fill="#45322a"/>
<circle cx="60" cy="11" r="6" fill="#3a2a22"/>
<circle cx="76" cy="12" r="6.5" fill="#47342a"/>
<circle cx="88" cy="24" r="6" fill="#3a2a20"/>
<circle cx="40" cy="32" r="5" fill="#3a2a22"/>
<circle cx="90" cy="38" r="4.5" fill="#40302a"/>
<path d="M54 30 C58 34 60 38 58 42" stroke="#3c2b22" stroke-width="2.6" fill="none" stroke-linecap="round"/>
<circle cx="47" cy="36" r="3.2" fill="#3c2b22"/><circle cx="66" cy="30" r="3" fill="#3c2b22"/><circle cx="84" cy="40" r="3.4" fill="#3c2b22"/><circle cx="36" cy="44" r="2.6" fill="#3c2b22"/><circle cx="92" cy="46" r="2.5" fill="#3c2b22"/>
<path d="M74 31 C80 34 80 40 78 44" stroke="#3c2b22" stroke-width="2.4" fill="none" stroke-linecap="round"/>
<path d="M44 16 C52 12 58 14 62 18 M68 15 C74 14 80 16 84 20" stroke="#6a5040" stroke-width="1.4" fill="none" opacity=".4"/>
<!-- brows / eyes -->
<path d="M45 40.5 Q51 38.5 56 41" stroke="#7a5a4c" stroke-width="1.1" fill="none"/>
<path d="M67 42 Q73 40 79 42.5" stroke="#7a5a4c" stroke-width="1.1" fill="none"/>
<ellipse cx="51" cy="44.5" rx="3" ry="1.3" fill="#7a6058"/>
<ellipse cx="72.5" cy="45.5" rx="3" ry="1.3" fill="#7a6058"/>
<!-- nose -->
<path d="M61 46 C60 52 58 56 58.5 58 C60 59.5 63 59.5 65 58" stroke="#c49482" stroke-width="1.3" fill="none"/>
<!-- mouth -->
<path d="M50 66.5 C56 68 63 68 68.5 66.5 C66 72 54 72.5 50 66.5Z" fill="#f6f1ea" stroke="#b27a6a" stroke-width=".9"/>
<!-- shirt -->
<path d="M-4 140 L-4 104 C4 92 18 86 34 84 L46 81 C54 88 76 89 84 81 L100 84 C116 88 128 96 136 104 L146 150 L-4 150 Z" fill="url(#shirt)"/>
<path d="M44 82 C50 96 78 96 86 82 C80 90 52 90 44 82Z" fill="#dcd4d8"/>
<path d="M20 104 C22 116 21 130 19 140" stroke="#d8d0d6" stroke-width="1.6" fill="none"/>
<path d="M118 100 C116 112 120 128 124 140" stroke="#d8d0d6" stroke-width="1.6" fill="none"/>
</g>
</g>
</svg>
<!-- /webcam -->
<!-- popup -->
<div class="a" style="left:774.3px;top:58.3px;width:245.7px;height:77.2px;background:#161618;border:1px solid #2c2c30;border-radius:11px;box-shadow:0 2px 6px rgba(0,0,0,.18)"></div>
<div class="a t" style="left:785.5px;top:72.9px;font-size:9.2px;color:#f2f2f4;font-weight:700;letter-spacing:-0.2px;">Exporting</div>
<div class="a t" style="left:785.5px;top:85.9px;font-size:8px;color:#9ea3ad;font-weight:400;letter-spacing:-0.15px;-webkit-text-stroke:.22px currentColor;">Rendering your file.</div>
<div class="a" style="left:965.8px;top:71.3px;width:42.5px;height:21.7px;background:#2a1719;border:1px solid #4a2327;border-radius:4px"></div>
<div class="a t" style="left:987.0px;transform:translateX(-50%);top:78.8px;font-size:8px;color:#e06a66;font-weight:400;letter-spacing:-0.1px;-webkit-text-stroke:.22px currentColor;">Cancel</div>
<div class="a" style="left:786.3px;top:102.5px;width:222.0px;height:5.5px;background:#262629;border-radius:3px"></div>
<div class="a" style="left:786.3px;top:102.5px;width:176.2px;height:5.5px;background:#3558dc;border-radius:3px 0 0 3px"></div>
<div class="a t" style="left:785.8px;top:115.4px;font-size:8.1px;color:#a7abb4;font-weight:400;letter-spacing:-0.15px;-webkit-text-stroke:.22px currentColor;">80% complete</div>
<!-- /popup -->
<!-- tools -->
<div class="a" style="left:286.2px;top:202.0px;width:4.0px;height:4.0px;background:#3b62e0;border-radius:50%"></div>
<svg class="a" style="left:294px;top:198px" width="13" height="12" viewBox="0 0 13 12"><g fill="none" stroke="#3b62e0" stroke-width="1.1" stroke-linejoin="round"><path d="M6 1.2 C6.4 4 7.2 4.8 10 5.2 C7.2 5.6 6.4 6.4 6 9.2 C5.6 6.4 4.8 5.6 2 5.2 C4.8 4.8 5.6 4 6 1.2Z"/></g><circle cx="10.6" cy="1.9" r="1" fill="#3b62e0"/><circle cx="2.3" cy="9.9" r="1.3" fill="#3b62e0"/></svg>
<svg class="a" style="left:295.5px;top:229px" width="11" height="11" viewBox="0 0 11 11"><path d="M1.2 1.2 L9.6 4.4 L5.8 5.8 L4.4 9.6 Z" fill="none" stroke="#8d929c" stroke-width="1.1" stroke-linejoin="round"/></svg>
<svg class="a" style="left:294.5px;top:258.5px" width="12" height="11" viewBox="0 0 12 11"><g fill="none" stroke="#8d929c" stroke-width="1.1" stroke-linejoin="round"><path d="M1 3.6a1 1 0 0 1 1-1h1.6l1-1.4h2.8l1 1.4H10a1 1 0 0 1 1 1v5.2a1 1 0 0 1-1 1H2a1 1 0 0 1-1-1z"/><circle cx="6" cy="6" r="1.7"/></g></svg>
<div class="a" style="left:419.4px;top:404.8px;width:476.0px;height:25.0px;background:#050506;border:1px solid #1b1b1e;border-radius:13px"></div>
<div class="a" style="left:423.3px;top:406.6px;width:22px;height:22px;border-radius:50%;background:#fafafa"></div>
<svg class="a" style="left:429.5px;top:412.2px" width="11" height="11" viewBox="0 0 11 11"><path d="M2.4 1.3 L9.6 5.5 L2.4 9.7 Z" fill="#0a0a0a" stroke="#0a0a0a" stroke-width="1.2" stroke-linejoin="round"/></svg>
<div class="a t" style="left:458.0px;top:414.8px;font-size:7px;color:#b5b9c2;font-weight:400;letter-spacing:-0.25px;-webkit-text-stroke:.22px currentColor;">0:00</div>
<div class="a" style="left:476.0px;top:417.2px;width:309.0px;height:1.0px;background:#2a2a2d"></div>
<div class="a" style="left:472.6px;top:413.8px;width:7.6px;height:7.6px;border-radius:50%;background:#f4f4f6"></div>
<div class="a t" style="left:790.2px;top:414.8px;font-size:7px;color:#8e939d;font-weight:400;letter-spacing:-0.25px;-webkit-text-stroke:.22px currentColor;">0:12</div>
<svg class="a" style="left:818.5px;top:412.5px" width="11" height="10" viewBox="0 0 11 10"><g fill="none" stroke="#9ca1aa" stroke-width="1" stroke-linejoin="round" stroke-linecap="round"><path d="M1 3.5h1.8L5.5 1v8L2.8 6.5H1z"/><path d="M7.3 3.4c.6.9.6 2.3 0 3.2M8.8 2.2c1.2 1.6 1.2 4 0 5.6"/></g></svg>
<div class="a" style="left:833.0px;top:417.0px;width:54.0px;height:1.4px;background:#dcdcde;border-radius:1px"></div>
<div class="a" style="left:883.2px;top:413.8px;width:7.6px;height:7.6px;border-radius:50%;background:#f8f8fa"></div>
<div class="a" style="left:647.5px;top:449.3px;width:20.0px;height:1.7px;background:#3a3a3e;border-radius:1px"></div>
<!-- /tools -->
<!-- timeline -->
<div class="a" style="left:284.0px;top:462.8px;width:747.0px;height:182.7px;background:#19191c;border:1px solid #262629;border-radius:12px;overflow:hidden"></div>
<svg class="a" style="left:299.5px;top:473px" width="12" height="12" viewBox="0 0 12 12"><g fill="none" stroke="#a2a7b1" stroke-width="1.15" stroke-linecap="round" stroke-linejoin="round"><circle cx="5" cy="5" r="4"/><path d="M8 8l2.6 2.6M5 3.2v3.6M3.2 5h3.6"/></g></svg>
<svg class="a" style="left:321.5px;top:473px" width="12" height="12" viewBox="0 0 12 12"><g fill="none" stroke="#a2a7b1" stroke-width="1.15" stroke-linecap="round" stroke-linejoin="round"><path d="M1 9.6 L8.6 2 L10 3.4 L2.4 11 Z M7.2 3.4 l1.4 1.4"/><path d="M3.4 1v2M2.4 2h2M9.8 7.6v2M8.8 8.6h2M5.6 .6v1"/></g></svg>
<svg class="a" style="left:343.5px;top:473px" width="12" height="12" viewBox="0 0 12 12"><g fill="none" stroke="#a2a7b1" stroke-width="1.15" stroke-linecap="round" stroke-linejoin="round"><circle cx="2.6" cy="2.8" r="1.7"/><circle cx="2.6" cy="8.4" r="1.7"/><path d="M4 3.8 L10.4 9.8M4 7.4 L10.4 1.4"/></g></svg>
<svg class="a" style="left:365px;top:473px" width="12" height="12" viewBox="0 0 12 12"><g fill="none" stroke="#a2a7b1" stroke-width="1.15" stroke-linecap="round" stroke-linejoin="round"><path d="M1 1.2h9.6v7H4.2L1.6 10.6V8.2H1z"/></g></svg>
<svg class="a" style="left:387px;top:473px" width="12" height="12" viewBox="0 0 12 12"><g fill="none" stroke="#a2a7b1" stroke-width="1.15" stroke-linecap="round" stroke-linejoin="round"><path d="M2.2 9.8a4.8 4.8 0 1 1 7.6 0"/><path d="M6 7 L8 4.4"/></g></svg>
<svg class="a" style="left:409.2px;top:473px" width="12" height="12" viewBox="0 0 12 12"><g fill="none" stroke="#a2a7b1" stroke-width="1.15" stroke-linecap="round" stroke-linejoin="round"><path d="M4 8.6V1.6l6-1v7"/><circle cx="2.6" cy="8.6" r="1.6"/><circle cx="8.6" cy="7.6" r="1.6"/></g></svg>
<div class="a t" style="left:434.4px;top:475.0px;font-size:8.3px;color:#b6bac3;font-weight:400;letter-spacing:-0.3px;-webkit-text-stroke:.22px currentColor;">16:9</div>
<svg class="a" style="left:455.5px;top:475.5px" width="8" height="6" viewBox="0 0 8 6"><path d="M1 1.4 L4 4.4 L7 1.4" fill="none" stroke="#a2a7b1" stroke-width="1.15" stroke-linecap="round" stroke-linejoin="round"/></svg>
<div class="a" style="left:475.6px;top:471.5px;width:1.0px;height:14.0px;background:#2c2c30"></div>
<svg class="a" style="left:487.5px;top:473px" width="11" height="11" viewBox="0 0 11 11"><g fill="none" stroke="#a2a7b1" stroke-width="1.15" stroke-linecap="round" stroke-linejoin="round"><path d="M2.6 .8v7.4h7.6M.8 2.6h7.4V10.2"/></g></svg>
<div class="a t" style="left:501.0px;top:475.0px;font-size:8.3px;color:#b6bac3;font-weight:400;letter-spacing:-0.25px;-webkit-text-stroke:.22px currentColor;">Crop</div>
<svg class="a" style="left:535.5px;top:472.8px" width="11.5" height="11.5" viewBox="0 0 12 12"><g fill="none" stroke="#a2a7b1" stroke-width="1.15" stroke-linecap="round" stroke-linejoin="round"><circle cx="6" cy="6" r="5"/><path d="M4.4 4.6a1.7 1.7 0 0 1 3.3.5c0 1.1-1.7 1.4-1.7 2.2"/><path d="M6 8.9v.1"/></g></svg>
<div class="a t" style="left:550.6px;top:475.0px;font-size:8.3px;color:#b6bac3;font-weight:400;letter-spacing:-0.25px;-webkit-text-stroke:.22px currentColor;">How trimming works</div>
<div class="a" style="left:801.0px;top:470.8px;width:44.5px;height:14.7px;background:#1f1f23;border:1px solid #2e2e33;border-radius:4px"></div>
<div class="a t" style="left:823.2px;transform:translateX(-50%);top:475.2px;font-size:7.4px;color:#3d62dc;font-weight:700;letter-spacing:-0.2px;">Side Scroll</div>
<div class="a t" style="left:849.2px;top:475.4px;font-size:7px;color:#8a8f99;font-weight:400;letter-spacing:-0.15px;-webkit-text-stroke:.22px currentColor;">Pan</div>
<div class="a" style="left:871.5px;top:470.8px;width:57.3px;height:14.7px;background:#1f1f23;border:1px solid #2e2e33;border-radius:4px"></div>
<div class="a t" style="left:900.1px;transform:translateX(-50%);top:475.2px;font-size:7.4px;color:#3d62dc;font-weight:700;letter-spacing:-0.2px;">⇧ + ⌘ + Scroll</div>
<div class="a t" style="left:933.0px;top:475.4px;font-size:7px;color:#8a8f99;font-weight:400;letter-spacing:-0.15px;-webkit-text-stroke:.22px currentColor;">Pan</div>
<div class="a" style="left:955.0px;top:470.8px;width:42.9px;height:14.7px;background:#1f1f23;border:1px solid #2e2e33;border-radius:4px"></div>
<div class="a t" style="left:976.5px;transform:translateX(-50%);top:475.2px;font-size:7.4px;color:#3d62dc;font-weight:700;letter-spacing:-0.2px;">⌘ + Scroll</div>
<div class="a t" style="left:1002.0px;top:475.4px;font-size:7px;color:#8a8f99;font-weight:400;letter-spacing:-0.15px;-webkit-text-stroke:.22px currentColor;">Zoom</div>
<div class="a" style="left:285.0px;top:492.6px;width:744.4px;height:1.0px;background:#252528"></div>
<div class="a" style="left:291.1px;top:494.0px;width:1.0px;height:5.5px;background:#3c3c40"></div>
<div class="a t" style="left:292.0px;transform:translateX(-50%);top:504.0px;font-size:7px;color:#3b62e0;font-weight:400;letter-spacing:-0.25px;-webkit-text-stroke:.22px currentColor;">0:00</div>
<div class="a" style="left:406.5px;top:494.0px;width:1.0px;height:5.5px;background:#3c3c40"></div>
<div class="a t" style="left:407.0px;transform:translateX(-50%);top:504.0px;font-size:7px;color:#80858f;font-weight:400;letter-spacing:-0.25px;-webkit-text-stroke:.22px currentColor;">0:02</div>
<div class="a" style="left:521.8px;top:494.0px;width:1.0px;height:5.5px;background:#3c3c40"></div>
<div class="a t" style="left:522.3px;transform:translateX(-50%);top:504.0px;font-size:7px;color:#80858f;font-weight:400;letter-spacing:-0.25px;-webkit-text-stroke:.22px currentColor;">0:04</div>
<div class="a" style="left:637.2px;top:494.0px;width:1.0px;height:5.5px;background:#3c3c40"></div>
<div class="a t" style="left:637.7px;transform:translateX(-50%);top:504.0px;font-size:7px;color:#80858f;font-weight:400;letter-spacing:-0.25px;-webkit-text-stroke:.22px currentColor;">0:06</div>
<div class="a" style="left:752.5px;top:494.0px;width:1.0px;height:5.5px;background:#3c3c40"></div>
<div class="a t" style="left:753.0px;transform:translateX(-50%);top:504.0px;font-size:7px;color:#80858f;font-weight:400;letter-spacing:-0.25px;-webkit-text-stroke:.22px currentColor;">0:08</div>
<div class="a" style="left:867.9px;top:494.0px;width:1.0px;height:5.5px;background:#3c3c40"></div>
<div class="a t" style="left:868.4px;transform:translateX(-50%);top:504.0px;font-size:7px;color:#80858f;font-weight:400;letter-spacing:-0.25px;-webkit-text-stroke:.22px currentColor;">0:10</div>
<div class="a" style="left:983.3px;top:494.0px;width:1.0px;height:5.5px;background:#3c3c40"></div>
<div class="a t" style="left:983.8px;transform:translateX(-50%);top:504.0px;font-size:7px;color:#80858f;font-weight:400;letter-spacing:-0.25px;-webkit-text-stroke:.22px currentColor;">0:12</div>
<div class="a" style="left:308.0px;top:511.8px;width:1.0px;height:3.0px;background:#2c2c30"></div>
<div class="a" style="left:331.0px;top:511.8px;width:1.0px;height:3.0px;background:#2c2c30"></div>
<div class="a" style="left:354.1px;top:511.8px;width:1.0px;height:3.0px;background:#2c2c30"></div>
<div class="a" style="left:377.2px;top:511.8px;width:1.0px;height:3.0px;background:#2c2c30"></div>
<div class="a" style="left:423.3px;top:511.8px;width:1.0px;height:3.0px;background:#2c2c30"></div>
<div class="a" style="left:446.4px;top:511.8px;width:1.0px;height:3.0px;background:#2c2c30"></div>
<div class="a" style="left:469.5px;top:511.8px;width:1.0px;height:3.0px;background:#2c2c30"></div>
<div class="a" style="left:492.5px;top:511.8px;width:1.0px;height:3.0px;background:#2c2c30"></div>
<div class="a" style="left:538.7px;top:511.8px;width:1.0px;height:3.0px;background:#2c2c30"></div>
<div class="a" style="left:561.8px;top:511.8px;width:1.0px;height:3.0px;background:#2c2c30"></div>
<div class="a" style="left:584.8px;top:511.8px;width:1.0px;height:3.0px;background:#2c2c30"></div>
<div class="a" style="left:607.9px;top:511.8px;width:1.0px;height:3.0px;background:#2c2c30"></div>
<div class="a" style="left:654.1px;top:511.8px;width:1.0px;height:3.0px;background:#2c2c30"></div>
<div class="a" style="left:677.1px;top:511.8px;width:1.0px;height:3.0px;background:#2c2c30"></div>
<div class="a" style="left:700.2px;top:511.8px;width:1.0px;height:3.0px;background:#2c2c30"></div>
<div class="a" style="left:723.3px;top:511.8px;width:1.0px;height:3.0px;background:#2c2c30"></div>
<div class="a" style="left:769.4px;top:511.8px;width:1.0px;height:3.0px;background:#2c2c30"></div>
<div class="a" style="left:792.5px;top:511.8px;width:1.0px;height:3.0px;background:#2c2c30"></div>
<div class="a" style="left:815.6px;top:511.8px;width:1.0px;height:3.0px;background:#2c2c30"></div>
<div class="a" style="left:838.6px;top:511.8px;width:1.0px;height:3.0px;background:#2c2c30"></div>
<div class="a" style="left:884.8px;top:511.8px;width:1.0px;height:3.0px;background:#2c2c30"></div>
<div class="a" style="left:907.8px;top:511.8px;width:1.0px;height:3.0px;background:#2c2c30"></div>
<div class="a" style="left:930.9px;top:511.8px;width:1.0px;height:3.0px;background:#2c2c30"></div>
<div class="a" style="left:954.0px;top:511.8px;width:1.0px;height:3.0px;background:#2c2c30"></div>
<div class="a" style="left:1000.1px;top:511.8px;width:1.0px;height:3.0px;background:#2c2c30"></div>
<div class="a" style="left:1023.2px;top:511.8px;width:1.0px;height:3.0px;background:#2c2c30"></div>
<div class="a" style="left:285.0px;top:514.6px;width:744.4px;height:0.9px;background:#252528"></div>
<div class="a" style="left:285.0px;top:566.5px;width:744.4px;height:1.0px;background:#1d1d20"></div>
<div class="a" style="left:285.0px;top:592.4px;width:744.4px;height:1.0px;background:#1d1d20"></div>
<div class="a" style="left:285.0px;top:618.0px;width:744.4px;height:1.0px;background:#1d1d20"></div>
<div class="a" style="left:353.3px;top:516.8px;width:197.9px;height:22.8px;background:#1c2036;border-radius:5px;overflow:hidden"></div>
<div class="a" style="left:353.3px;top:516.8px;width:6.0px;height:22.8px;background:#3a5fdd;border-radius:5px 0 0 5px"></div>
<div class="a" style="left:545.2px;top:516.8px;width:6.0px;height:22.8px;background:#3a5fdd;border-radius:0 5px 5px 0"></div>
<svg class="a" style="left:438.2px;top:519px" width="10" height="10" viewBox="0 0 10 10"><g fill="none" stroke="#c6cad2" stroke-width="1" stroke-linecap="round"><circle cx="4.3" cy="4.3" r="3.3"/><path d="M6.8 6.8 9 9M4.3 2.9v2.8M2.9 4.3h2.8"/></g></svg>
<div class="a t" style="left:451.2px;top:520.8px;font-size:8.2px;color:#dfe2e8;font-weight:700;letter-spacing:-0.4px;">2.2×</div>
<div class="a" style="left:602.3px;top:516.8px;width:57.0px;height:22.8px;background:#1c2036;border-radius:5px;overflow:hidden"></div>
<div class="a" style="left:602.3px;top:516.8px;width:6.0px;height:22.8px;background:#3a5fdd;border-radius:5px 0 0 5px"></div>
<div class="a" style="left:653.3px;top:516.8px;width:6.0px;height:22.8px;background:#3a5fdd;border-radius:0 5px 5px 0"></div>
<svg class="a" style="left:616.8px;top:519px" width="10" height="10" viewBox="0 0 10 10"><g fill="none" stroke="#c6cad2" stroke-width="1" stroke-linecap="round"><circle cx="4.3" cy="4.3" r="3.3"/><path d="M6.8 6.8 9 9M4.3 2.9v2.8M2.9 4.3h2.8"/></g></svg>
<div class="a t" style="left:629.8px;top:520.8px;font-size:8.2px;color:#dfe2e8;font-weight:700;letter-spacing:-0.4px;">1.8×</div>
<div class="a" style="left:681.3px;top:516.8px;width:57.0px;height:22.8px;background:#1c2036;border-radius:5px;overflow:hidden"></div>
<div class="a" style="left:681.3px;top:516.8px;width:6.0px;height:22.8px;background:#3a5fdd;border-radius:5px 0 0 5px"></div>
<div class="a" style="left:732.3px;top:516.8px;width:6.0px;height:22.8px;background:#3a5fdd;border-radius:0 5px 5px 0"></div>
<svg class="a" style="left:695.8px;top:519px" width="10" height="10" viewBox="0 0 10 10"><g fill="none" stroke="#c6cad2" stroke-width="1" stroke-linecap="round"><circle cx="4.3" cy="4.3" r="3.3"/><path d="M6.8 6.8 9 9M4.3 2.9v2.8M2.9 4.3h2.8"/></g></svg>
<div class="a t" style="left:708.8px;top:520.8px;font-size:8.2px;color:#dfe2e8;font-weight:700;letter-spacing:-0.4px;">1.8×</div>
<div class="a" style="left:910.7px;top:516.8px;width:57.8px;height:22.8px;background:#1c2036;border-radius:5px;overflow:hidden"></div>
<div class="a" style="left:910.7px;top:516.8px;width:6.0px;height:22.8px;background:#3a5fdd;border-radius:5px 0 0 5px"></div>
<div class="a" style="left:962.5px;top:516.8px;width:6.0px;height:22.8px;background:#3a5fdd;border-radius:0 5px 5px 0"></div>
<svg class="a" style="left:925.6px;top:519px" width="10" height="10" viewBox="0 0 10 10"><g fill="none" stroke="#c6cad2" stroke-width="1" stroke-linecap="round"><circle cx="4.3" cy="4.3" r="3.3"/><path d="M6.8 6.8 9 9M4.3 2.9v2.8M2.9 4.3h2.8"/></g></svg>
<div class="a t" style="left:938.6px;top:520.8px;font-size:8.2px;color:#dfe2e8;font-weight:700;letter-spacing:-0.4px;">1.8×</div>
<div class="a t" style="left:657.2px;transform:translateX(-50%);top:550.4px;font-size:7.3px;color:#3c3d42;font-weight:400;letter-spacing:-0.15px;-webkit-text-stroke:.22px currentColor;">Press T to add trim</div>
<div class="a t" style="left:657.2px;transform:translateX(-50%);top:576.3px;font-size:7.3px;color:#3c3d42;font-weight:400;letter-spacing:-0.15px;-webkit-text-stroke:.22px currentColor;">Press A to add annotation</div>
<div class="a t" style="left:657.2px;transform:translateX(-50%);top:602.1px;font-size:7.3px;color:#3c3d42;font-weight:400;letter-spacing:-0.15px;-webkit-text-stroke:.22px currentColor;">Press S to add speed</div>
<div class="a t" style="left:657.2px;transform:translateX(-50%);top:627.8px;font-size:7.3px;color:#3c3d42;font-weight:400;letter-spacing:-0.15px;-webkit-text-stroke:.22px currentColor;">Click music icon to add audio</div>
<div class="a" style="left:284.5px;top:494.0px;width:1.9px;height:144.0px;background:linear-gradient(180deg,#3b62e0 0,#3b62e0 90%,#2a3a80 100%)"></div>
<svg class="a" style="left:284px;top:493.5px" width="8" height="9" viewBox="0 0 8 9"><path d="M0.6 0.4 H5 A2.6 2.6 0 0 1 7.4 3 L4 8 L.6 8Z" fill="#3b62e0"/></svg>
<!-- /timeline -->
</body></html>
